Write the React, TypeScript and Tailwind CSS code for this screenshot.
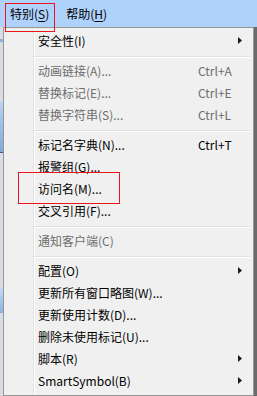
import React from "react";

type Item =
  | { kind: "sep" }
  | { kind: "item"; label: string; shortcut?: string; sub?: boolean; disabled?: boolean };

const items: Item[] = [
  { kind: "item", label: "安全性(I)", sub: true },
  { kind: "sep" },
  { kind: "item", label: "动画链接(A)...", shortcut: "Ctrl+A", disabled: true },
  { kind: "item", label: "替换标记(E)...", shortcut: "Ctrl+E", disabled: true },
  { kind: "item", label: "替换字符串(S)...", shortcut: "Ctrl+L", disabled: true },
  { kind: "sep" },
  { kind: "item", label: "标记名字典(N)...", shortcut: "Ctrl+T" },
  { kind: "item", label: "报警组(G)..." },
  { kind: "item", label: "访问名(M)..." },
  { kind: "item", label: "交叉引用(F)..." },
  { kind: "sep" },
  { kind: "item", label: "通知客户端(C)", disabled: true },
  { kind: "sep" },
  { kind: "item", label: "配置(O)", sub: true },
  { kind: "item", label: "更新所有窗口略图(W)..." },
  { kind: "item", label: "更新使用计数(D)..." },
  { kind: "item", label: "删除未使用标记(U)..." },
  { kind: "item", label: "脚本(R)", sub: true },
  { kind: "item", label: "SmartSymbol(B)", sub: true },
];

function Arrow() {
  return (
    <svg width="4" height="7" viewBox="0 0 4 7" className="block">
      <polygon points="0,0 4,3.5 0,7" fill="#1a1a1a" />
    </svg>
  );
}

export default function App() {
  return (
    <div
      className="relative w-[257px] h-[396px] overflow-hidden bg-[#f0f0f0] text-[12px] leading-none"
      style={{ fontFamily: '"Noto Sans CJK SC", "Noto Sans", sans-serif' }}
    >
      {/* menubar */}
      <div className="flex h-[27px] items-center bg-[#aed2fb] pl-[10px] gap-[17px] text-[#000]">
        <span>
          特别(<span className="underline underline-offset-2">S</span>)
        </span>
        <span>
          帮助(<span className="underline underline-offset-2">H</span>)
        </span>
      </div>

      <div className="flex h-[369px]">
        {/* underlying window strip */}
        <div className="flex w-[3px] flex-col bg-[#d9dde3]">
          <div className="h-[12px]" />
          <div className="h-[3px] bg-[#8fb3dc]" />
          <div className="h-[60px]" />
          <div className="h-[50px] bg-gradient-to-b from-[#b7d3f2] to-[#7fa9dc]" />
          <div className="h-[1px] bg-[#3a5f8f]" />
          <div className="h-[135px]" />
          <div className="h-[25px] bg-gradient-to-b from-[#c3dbf5] to-[#89b2e2]" />
          <div className="flex-1" />
        </div>

        {/* the menu */}
        <div className="relative flex w-[251px] flex-col border border-[#979797] bg-[#f0f0f0] pt-[2px]">
          <div className="absolute left-[29px] top-0 bottom-0 w-[1px] bg-[#e2e3e3]" />
          <div className="absolute left-[30px] top-0 bottom-0 w-[1px] bg-[#ffffff]" />
          {items.map((it, i) =>
            it.kind === "sep" ? (
              <div key={i} className="relative h-[8px] pl-[30px] pr-[3px]">
                <div className="mt-[4px] h-[1px] bg-[#e0e0e0]" />
                <div className="h-[1px] bg-[#ffffff]" />
              </div>
            ) : (
              <div
                key={i}
                className={`relative flex h-[22px] items-center pl-[34px] ${
                  it.disabled ? "text-[#6d6d6d]" : "text-[#000000]"
                }`}
              >
                <span className="whitespace-nowrap">{it.label}</span>
                {it.shortcut && (
                  <span className="absolute left-[194px] whitespace-nowrap">{it.shortcut}</span>
                )}
                {it.sub && (
                  <span className="absolute left-[234px] top-[7px]">
                    <Arrow />
                  </span>
                )}
              </div>
            )
          )}
        </div>

        {/* right shadow */}
        <div className="w-[3px] bg-[#6b6b6b]" />
      </div>

      {/* annotation boxes */}
      <div className="absolute left-[5px] top-[3px] h-[29px] w-[50px] border border-[#e8161b]" />
      <div className="absolute left-[18px] top-[172px] h-[32px] w-[102px] border border-[#e8161b]" />
    </div>
  );
}
